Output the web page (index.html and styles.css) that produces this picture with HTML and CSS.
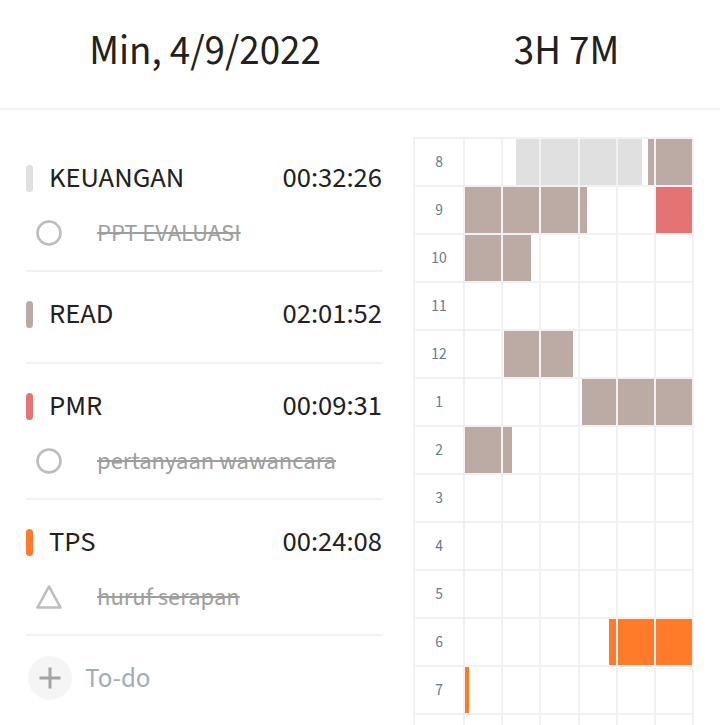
FILE: index.html
```html
<!DOCTYPE html>
<html>
<head>
<title>Min, 4/9/2022</title>
<link rel="stylesheet" href="styles.css">
</head>
<body>
<div class="header">
  <div class="header-date">Min, 4/9/2022</div>
  <div class="header-total">3H 7M</div>
</div>

<div class="main">
  <div class="tasks">
    <div class="group">
      <div class="title-row">
        <span class="tag gray"></span>
        <span class="name">KEUANGAN</span>
        <span class="time">00:32:26</span>
      </div>
      <div class="todo">
        <svg class="todo-icon" width="28" height="28" viewBox="0 0 28 28"><circle cx="14" cy="14" r="11.5" fill="none" stroke="#bdbdbd" stroke-width="2.6"/></svg>
        <span class="todo-text">PPT EVALUASI</span>
      </div>
    </div>
    <div class="group">
      <div class="title-row">
        <span class="tag brown"></span>
        <span class="name">READ</span>
        <span class="time">02:01:52</span>
      </div>
    </div>
    <div class="group">
      <div class="title-row">
        <span class="tag red"></span>
        <span class="name">PMR</span>
        <span class="time">00:09:31</span>
      </div>
      <div class="todo">
        <svg class="todo-icon" width="28" height="28" viewBox="0 0 28 28"><circle cx="14" cy="14" r="11.5" fill="none" stroke="#bdbdbd" stroke-width="2.6"/></svg>
        <span class="todo-text">pertanyaan wawancara</span>
      </div>
    </div>
    <div class="group">
      <div class="title-row">
        <span class="tag orange"></span>
        <span class="name">TPS</span>
        <span class="time">00:24:08</span>
      </div>
      <div class="todo">
        <svg class="todo-icon" width="28" height="28" viewBox="0 0 28 28"><path d="M14 3.5 L25.5 24.5 L2.5 24.5 Z" fill="none" stroke="#bdbdbd" stroke-width="2.6" stroke-linejoin="round"/></svg>
        <span class="todo-text">huruf serapan</span>
      </div>
    </div>
    <div class="add">
      <span class="add-btn">
        <svg width="24" height="24" viewBox="0 0 24 24"><path d="M12 1.5 V22.5 M1.5 12 H22.5" stroke="#a3a3a3" stroke-width="3"/></svg>
      </span>
      <span class="add-text">To-do</span>
    </div>
  </div>

  <div class="timeline">
    <!-- 8 -->
    <div class="hour">8</div>
    <div class="cell"></div>
    <div class="cell"><span class="fill gray" style="margin-left:36%;width:64%"></span></div>
    <div class="cell"><span class="fill gray" style="width:100%"></span></div>
    <div class="cell"><span class="fill gray" style="width:100%"></span></div>
    <div class="cell"><span class="fill gray" style="width:68%"></span><span class="fill brown" style="margin-left:16%;width:16%"></span></div>
    <div class="cell"><span class="fill brown" style="width:100%"></span></div>
    <!-- 9 -->
    <div class="hour">9</div>
    <div class="cell"><span class="fill brown" style="width:100%"></span></div>
    <div class="cell"><span class="fill brown" style="width:100%"></span></div>
    <div class="cell"><span class="fill brown" style="width:100%"></span></div>
    <div class="cell"><span class="fill brown" style="width:20%"></span></div>
    <div class="cell"></div>
    <div class="cell"><span class="fill red" style="width:100%"></span></div>
    <!-- 10 -->
    <div class="hour">10</div>
    <div class="cell"><span class="fill brown" style="width:100%"></span></div>
    <div class="cell"><span class="fill brown" style="width:78%"></span></div>
    <div class="cell"></div>
    <div class="cell"></div>
    <div class="cell"></div>
    <div class="cell"></div>
    <!-- 11 -->
    <div class="hour">11</div>
    <div class="cell"></div>
    <div class="cell"></div>
    <div class="cell"></div>
    <div class="cell"></div>
    <div class="cell"></div>
    <div class="cell"></div>
    <!-- 12 -->
    <div class="hour">12</div>
    <div class="cell"></div>
    <div class="cell"><span class="fill brown" style="margin-left:3%;width:97%"></span></div>
    <div class="cell"><span class="fill brown" style="width:87%"></span></div>
    <div class="cell"></div>
    <div class="cell"></div>
    <div class="cell"></div>
    <!-- 1 -->
    <div class="hour">1</div>
    <div class="cell"></div>
    <div class="cell"></div>
    <div class="cell"></div>
    <div class="cell"><span class="fill brown" style="margin-left:8%;width:92%"></span></div>
    <div class="cell"><span class="fill brown" style="width:100%"></span></div>
    <div class="cell"><span class="fill brown" style="width:100%"></span></div>
    <!-- 2 -->
    <div class="hour">2</div>
    <div class="cell"><span class="fill brown" style="width:100%"></span></div>
    <div class="cell"><span class="fill brown" style="width:25%"></span></div>
    <div class="cell"></div>
    <div class="cell"></div>
    <div class="cell"></div>
    <div class="cell"></div>
    <!-- 3 -->
    <div class="hour">3</div>
    <div class="cell"></div>
    <div class="cell"></div>
    <div class="cell"></div>
    <div class="cell"></div>
    <div class="cell"></div>
    <div class="cell"></div>
    <!-- 4 -->
    <div class="hour">4</div>
    <div class="cell"></div>
    <div class="cell"></div>
    <div class="cell"></div>
    <div class="cell"></div>
    <div class="cell"></div>
    <div class="cell"></div>
    <!-- 5 -->
    <div class="hour">5</div>
    <div class="cell"></div>
    <div class="cell"></div>
    <div class="cell"></div>
    <div class="cell"></div>
    <div class="cell"></div>
    <div class="cell"></div>
    <!-- 6 -->
    <div class="hour">6</div>
    <div class="cell"></div>
    <div class="cell"></div>
    <div class="cell"></div>
    <div class="cell"><span class="fill orange" style="margin-left:81%;width:19%"></span></div>
    <div class="cell"><span class="fill orange" style="width:100%"></span></div>
    <div class="cell"><span class="fill orange" style="width:100%"></span></div>
    <!-- 7 -->
    <div class="hour">7</div>
    <div class="cell"><span class="fill orange" style="width:11%"></span></div>
    <div class="cell"></div>
    <div class="cell"></div>
    <div class="cell"></div>
    <div class="cell"></div>
    <div class="cell"></div>
    <!-- next row, below the fold -->
    <div class="hour"></div>
    <div class="cell"></div>
    <div class="cell"></div>
    <div class="cell"></div>
    <div class="cell"></div>
    <div class="cell"></div>
    <div class="cell"></div>
  </div>
</div>
</body>
</html>
```
FILE: styles.css
```css
html, body {
	margin		: 0;
	height		: 100%;
	overflow	: hidden;
}
body {
	background-color: white;
	color		: #212121;
	font-family	: "Source Sans 3", Lato, "Noto Sans", sans-serif;
}

/* header */
.header {
	display		: flex;
	align-items	: center;
	height		: 102px;
	padding-bottom	: 6px;
	border-bottom	: 2px solid #f1f1f1;
	font-size	: 41px;
}
.header-date {
	width		: 358px;
	margin-left	: 26px;
	text-align	: center;
}
.header-total {
	flex		: 1;
	margin-left	: 29px;
	text-align	: center;
}

/* main */
.main {
	display		: flex;
	align-items	: flex-start;
	padding-top	: 27px;
}
.tasks {
	width		: 357px;
	margin-left	: 26px;
	margin-right	: 30px;
}
.group {
	padding		: 18px 0 24px;
	border-bottom	: 2px solid #f1f1f1;
}
.group:first-child { padding-top: 17px; }
.title-row {
	display		: flex;
	align-items	: center;
	height		: 48px;
	font-size	: 28.6px;
}
.tag {
	width		: 7px;
	height		: 27px;
	border-radius	: 4px;
	margin-right	: 16px;
}
.name { flex: 1; }
.time { margin-right: 1px; }
.todo {
	display		: flex;
	align-items	: center;
	height		: 26px;
	margin-top	: 18px;
}
.todo-icon {
	margin-left	: 9px;
	margin-right	: 34px;
}
.todo-text {
	font-size	: 24.6px;
	color		: #9e9e9e;
	text-decoration	: line-through;
	text-decoration-thickness: 2px;
}
.add {
	display		: flex;
	align-items	: center;
	padding-top	: 20px;
}
.add-btn {
	display		: flex;
	align-items	: center;
	justify-content	: center;
	width		: 44px;
	height		: 44px;
	margin-left	: 2px;
	margin-right	: 13px;
	border-radius	: 50%;
	background-color: #f5f5f6;
}
.add-text {
	font-size	: 27px;
	color		: #a2acb9;
}

/* timeline */
.timeline {
	display		: grid;
	grid-template-columns: 48px repeat(6, 1fr);
	grid-auto-rows	: 46px;
	gap		: 2px;
	padding		: 2px;
	width		: 277px;
	background-color: #f1f1f3;
}
.hour {
	display		: flex;
	align-items	: center;
	justify-content	: center;
	background-color: white;
	font-size	: 15.5px;
	color		: #657b88;
}
.cell {
	display		: flex;
	background-color: white;
}
.fill { flex: none; }

.gray	{ background-color: #e0e0e0; }
.brown	{ background-color: #bcaaa4; }
.red	{ background-color: #e57373; }
.orange	{ background-color: #ff7a29; }
```
